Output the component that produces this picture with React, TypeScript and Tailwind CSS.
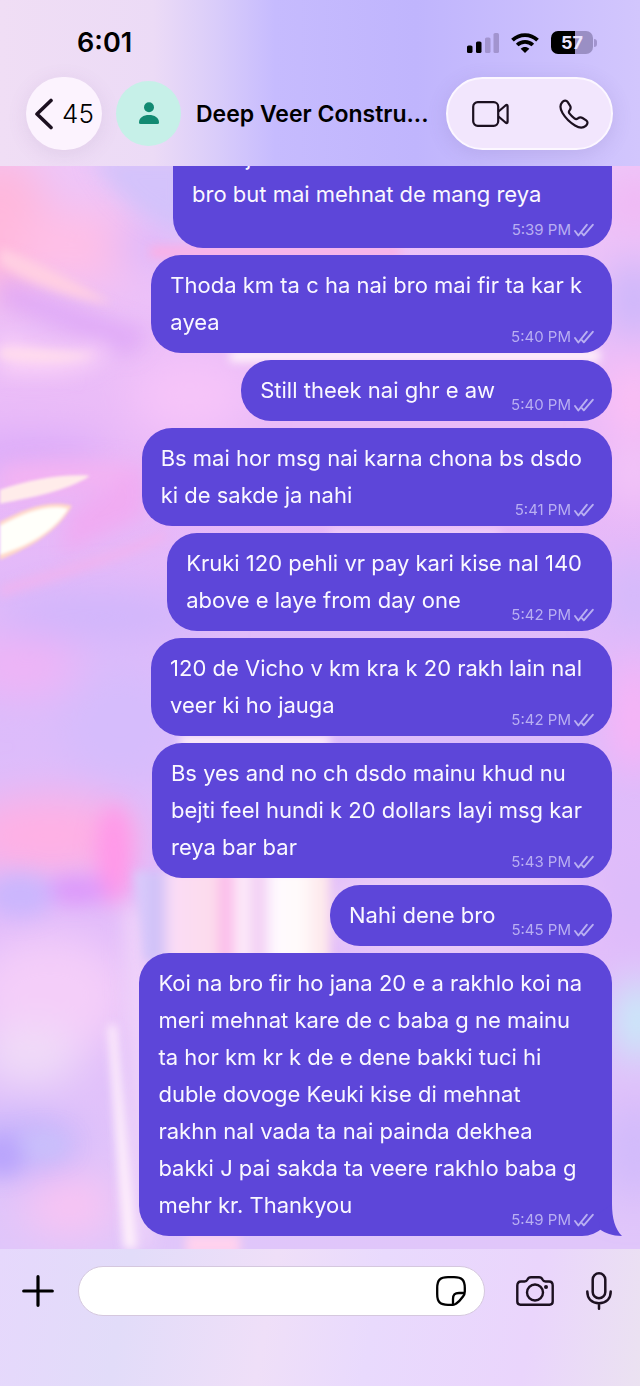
import React from "react";

type Message = {
  lines: string[];
  time: string;
};

const messages: Message[] = [
  { lines: ["Thoda km ta c ha nai bro mai fir ta kar k", "ayea"], time: "5:40 PM" },
  { lines: ["Still theek nai ghr e aw"], time: "5:40 PM" },
  { lines: ["Bs mai hor msg nai karna chona bs dsdo", "ki de sakde ja nahi"], time: "5:41 PM" },
  { lines: ["Kruki 120 pehli vr pay kari kise nal 140", "above e laye from day one"], time: "5:42 PM" },
  { lines: ["120 de Vicho v km kra k 20 rakh lain nal", "veer ki ho jauga"], time: "5:42 PM" },
  {
    lines: ["Bs yes and no ch dsdo mainu khud nu", "bejti feel hundi k 20 dollars layi msg kar", "reya bar bar"],
    time: "5:43 PM",
  },
  { lines: ["Nahi dene bro"], time: "5:45 PM" },
  {
    lines: [
      "Koi na bro fir ho jana 20 e a rakhlo koi na",
      "meri mehnat kare de c baba g ne mainu",
      "ta hor km kr k de e dene bakki tuci hi",
      "duble dovoge Keuki kise di mehnat",
      "rakhn nal vada ta nai painda dekhea",
      "bakki J pai sakda ta veere rakhlo baba g",
      "mehr kr. Thankyou",
    ],
    time: "5:49 PM",
  },
];

function Ticks() {
  return (
    <svg className="h-3.5 w-5" viewBox="0 0 20 14" fill="none" stroke="currentColor" strokeWidth="1.9" strokeLinecap="round" strokeLinejoin="round">
      <path d="M1 8L4.300 12.500L12.800 1.800" />
      <path d="M7.900 10.200L9.800 12.300L18.800 1.800" />
    </svg>
  );
}

function Meta({ time }: { time: string }) {
  return (
    <span className="flex shrink-0 items-center gap-[3px] text-[15px] leading-5 text-[#b9aff2]">
      {time}
      <Ticks />
    </span>
  );
}

function Bubble({ message, last }: { message: Message; last: boolean }) {
  const head = message.lines.slice(0, -1);
  const tailLine = message.lines[message.lines.length - 1];
  return (
    <li className="relative rounded-[30px] bg-[#5d46d9] py-3 pr-[18px] pl-[19px]">
      {head.map((line) => (
        <p key={line} className="pr-3 whitespace-nowrap">{line}</p>
      ))}
      <div className="flex items-end justify-between gap-4">
        <p className="whitespace-nowrap">{tailLine}</p>
        <div className="-mb-1.5">
          <Meta time={message.time} />
        </div>
      </div>
      {last && (
        <svg className="absolute right-[-10px] bottom-0 h-8 w-6" viewBox="0 0 24 32" fill="#5d46d9">
          <path d="M14 0C14 14 17 25 24 32C14 32 7 29 2 25.500L0 10Z" />
        </svg>
      )}
    </li>
  );
}

function Wallpaper() {
  return (
    <svg className="absolute inset-0 h-full w-full" viewBox="0 0 640 1084" preserveAspectRatio="none" aria-hidden="true">
      <defs>
        <linearGradient id="base" x1="0" y1="0" x2="0" y2="1">
          <stop offset="0" stopColor="#eec6f8" />
          <stop offset="0.3" stopColor="#e9b8f8" />
          <stop offset="0.5" stopColor="#dcbcfb" />
          <stop offset="0.7" stopColor="#e2bcfa" />
          <stop offset="1" stopColor="#e0c6fa" />
        </linearGradient>
        <linearGradient id="ray" x1="0" y1="0" x2="1" y2="0">
          <stop offset="0" stopColor="#dccdfb" />
          <stop offset="0.12" stopColor="#cfc0f8" />
          <stop offset="0.2" stopColor="#fbdcf6" />
          <stop offset="0.4" stopColor="#fddcec" />
          <stop offset="0.47" stopColor="#fbb8ea" />
          <stop offset="0.55" stopColor="#fdeefa" />
          <stop offset="0.64" stopColor="#f2cdf4" />
          <stop offset="0.72" stopColor="#fffaff" />
          <stop offset="0.85" stopColor="#fffafa" />
          <stop offset="1" stopColor="#fde2e8" />
        </linearGradient>
        <filter id="soft2" x="-50%" y="-50%" width="200%" height="200%"><feGaussianBlur stdDeviation="1.800" /></filter>
        <filter id="soft5" x="-50%" y="-50%" width="200%" height="200%"><feGaussianBlur stdDeviation="5" /></filter>
        <filter id="soft9" x="-50%" y="-50%" width="200%" height="200%"><feGaussianBlur stdDeviation="10" /></filter>
        <filter id="soft20" x="-50%" y="-50%" width="200%" height="200%"><feGaussianBlur stdDeviation="20" /></filter>
      </defs>
      <rect width="640" height="1084" fill="url(#base)" />
      <g filter="url(#soft20)">
        <ellipse cx="0" cy="60" rx="50" ry="70" fill="#ffb8dc" />
        <ellipse cx="80" cy="80" rx="66" ry="36" fill="#ffbfe6" />
        <ellipse cx="150" cy="80" rx="40" ry="20" fill="#dcb8fb" />
        <ellipse cx="30" cy="290" rx="80" ry="20" fill="#d9aafa" />
        <ellipse cx="190" cy="230" rx="60" ry="40" fill="#f6c4f9" />
        <ellipse cx="100" cy="450" rx="110" ry="24" fill="#cfb6fc" />
        <ellipse cx="20" cy="500" rx="60" ry="30" fill="#efb4f6" />
        <ellipse cx="120" cy="560" rx="60" ry="60" fill="#d6bcfc" />
        <ellipse cx="50" cy="670" rx="90" ry="40" fill="#ffb0e4" />
        <ellipse cx="50" cy="830" rx="80" ry="60" fill="#f4cef9" />
        <ellipse cx="30" cy="890" rx="50" ry="30" fill="#f0dcf8" />
        <ellipse cx="20" cy="980" rx="60" ry="30" fill="#c4b2fc" />
        <ellipse cx="70" cy="1040" rx="46" ry="30" fill="#f9c4f3" />
        <ellipse cx="450" cy="745" rx="130" ry="40" fill="#eed4f6" />
        <ellipse cx="634" cy="36" rx="30" ry="26" fill="#f2b8f4" />
        <ellipse cx="634" cy="134" rx="26" ry="40" fill="#c8b6fb" />
        <ellipse cx="634" cy="234" rx="26" ry="40" fill="#ffc0f4" />
        <ellipse cx="634" cy="310" rx="26" ry="30" fill="#f6c8f8" />
        <ellipse cx="634" cy="430" rx="26" ry="40" fill="#d2bafb" />
        <ellipse cx="634" cy="550" rx="26" ry="60" fill="#fbb4f6" />
        <ellipse cx="634" cy="740" rx="26" ry="50" fill="#dcbcfa" />
        <ellipse cx="638" cy="855" rx="20" ry="40" fill="#c0faf8" />
        <ellipse cx="634" cy="985" rx="30" ry="50" fill="#d0bafb" />
      </g>
      <g filter="url(#soft9)">
        <path d="M90 -10H190V70C150 60 120 40 90 -10Z" fill="#cdc2fb" opacity="0.8" />
        <path d="M0 110C50 130 100 150 150 166L130 190C80 170 30 150 0 140Z" fill="#dba2f7" opacity="0.7" />
        <path d="M0 168C50 190 80 190 104 176C112 196 80 214 0 206Z" fill="#fbd2f8" />
        <path d="M0 300C60 290 110 296 144 300V306C90 330 50 330 0 330Z" fill="#f3b2f2" />
        <path d="M144 300L70 345L60 390L144 350Z" fill="#f0abf2" />
        <ellipse cx="114" cy="690" rx="18" ry="50" fill="#ff98e8" />
        <ellipse cx="76" cy="725" rx="34" ry="14" fill="#dc98fb" />
        <ellipse cx="20" cy="730" rx="34" ry="22" fill="#cbb6fd" />
        <ellipse cx="44" cy="980" rx="26" ry="14" fill="#c9c0fb" />
        <ellipse cx="2" cy="990" rx="22" ry="20" fill="#b9a4fc" />
        <path d="M124 740H150V1084H134Z" fill="#f0d4f9" />
      </g>
      <g filter="url(#soft5)">
        <path d="M0 82C40 96 80 118 112 138C74 132 30 118 0 98Z" fill="#ffcfe2" />
        <path d="M0 182C30 182 60 186 96 188C70 200 30 196 0 192Z" fill="#ffdcec" />
        <path d="M0 420C60 400 120 384 166 364V374C120 396 60 414 0 432Z" fill="#f2b2ee" opacity="0.7" />
        <path d="M150 80H400V92H150Z" fill="#f9b0e6" />
        <path d="M230 184H600V196H230Z" fill="#fff2fa" />
        <path d="M330 366H500V370H330Z" fill="#fff0f8" />
        <path d="M180 570H330V582H180Z" fill="#fff0f8" />
        <path d="M134 706H330V796H144Z" fill="url(#ray)" />
        <path d="M108 860L124 1084H137L116 860Z" fill="#fff0fb" />
        <path d="M186 1070H240V1090H186Z" fill="#ffd2ee" />
      </g>
      <g filter="url(#soft2)">
        <path d="M0 324C30 314 60 308 90 310C66 326 30 332 0 338Z" fill="#ffecea" />
        <path d="M0 356C26 342 50 334 72 340C58 366 30 382 0 394Z" fill="#ffd9c8" />
        <path d="M0 360C26 346 48 338 68 343C54 366 28 380 0 389Z" fill="#fffffa" />
      </g>
    </svg>
  );
}

export default function App() {
  return (
    <div className="flex h-screen flex-col overflow-hidden bg-[#e6cdf9] font-['Inter','Liberation_Sans',sans-serif] text-black">
      <header className="shrink-0 bg-[linear-gradient(90deg,#f0def5_0%,#ecdbf6_24%,#d9ccfa_34%,#c6bbfe_43%,#c0b5fd_65%,#d2c6fd_100%)] pb-4">
        <div className="flex h-[77px] items-center justify-between pt-2 pr-[43px] pl-[77px]">
          <time className="text-[27px] leading-8 font-semibold">6:01</time>
          <div className="flex items-center gap-3">
            <svg className="h-5 w-8" viewBox="0 0 32 20">
              <rect x="0" y="12.500" width="5.500" height="7.500" rx="1.600" />
              <rect x="9" y="8.500" width="5.500" height="11.500" rx="1.600" />
              <rect x="18" y="4.500" width="5.500" height="15.500" rx="1.600" fill="#a294cf" />
              <rect x="26.500" y="0" width="5.500" height="20" rx="1.600" fill="#a294cf" />
            </svg>
            <svg className="h-5 w-7" viewBox="0 0 28 20" fill="none" stroke="#000" strokeWidth="3.800">
              <path d="M1.500 7.200C8.500 0.300 19.500 0.300 26.500 7.200" />
              <path d="M6.200 12C10.600 7.800 17.400 7.800 21.800 12" />
              <path d="M14 20l-4.300-4.300c2.400-2.200 6.200-2.200 8.600 0z" fill="#000" stroke="none" />
            </svg>
            <div className="flex items-center gap-px">
              <div className="flex h-[23px] w-[42px] items-center justify-center rounded-[7px] bg-linear-to-r from-black from-57% to-[#9a8fc4] to-57% text-lg leading-5 font-bold text-[#ece6ff]">57</div>
              <div className="h-2 w-[3px] rounded-r-full bg-[#a294cf]" />
            </div>
          </div>
        </div>
        <div className="flex items-center pr-[27px] pl-[26px]">
          <button aria-label="Back, 45 unread chats" className="flex h-[73px] w-[76px] shrink-0 items-center justify-center gap-2 rounded-full bg-[#fcf3fe] text-[26px] font-light shadow-[0_4px_20px_rgba(120,90,150,0.12)]">
            <svg className="h-8 w-5" viewBox="0 0 20 32" fill="none" stroke="#1c1020" strokeWidth="3.600" strokeLinecap="round" strokeLinejoin="round">
              <path d="M17 2.500L3 16l14 13.500" />
            </svg>
            45
          </button>
          <div className="ml-3.5 flex size-[65px] shrink-0 items-center justify-center rounded-full bg-[#c6f0e8]">
            <svg className="h-6 w-5" viewBox="0 0 20 24" fill="#128a72">
              <circle cx="10" cy="5.200" r="5" />
              <path d="M0 20.500C0 15.600 4.500 13 10 13S20 15.600 20 20.500Q20 22 18.500 22H1.500Q0 22 0 20.500Z" />
            </svg>
          </div>
          <h1 className="ml-[15px] min-w-0 flex-1 text-[23px] leading-8 font-semibold whitespace-nowrap">Deep Veer Constru...</h1>
          <div className="flex h-[73px] w-[167px] shrink-0 items-center justify-between rounded-full border-2 border-[#fcf7ff] bg-[#f2e6fd] pr-[22px] pl-6 shadow-[0_4px_20px_rgba(100,80,150,0.16)]">
            <button aria-label="Video call">
              <svg className="h-[26px] w-[37px]" viewBox="0 0 37 26" fill="none" stroke="#1c1020" strokeWidth="2.200" strokeLinejoin="round">
                <rect x="1.200" y="1.200" width="25" height="23.600" rx="4.500" />
                <path d="M26.500 10.500L33.500 4.500Q35.600 3 35.600 5.200V20.800Q35.600 23 33.500 21.500L26.500 15.500" />
              </svg>
            </button>
            <button aria-label="Voice call">
              <svg className="h-[30px] w-[30px]" viewBox="0 0 30 30" fill="none" stroke="#1c1020" strokeWidth="2.200" strokeLinejoin="round">
                <path d="M3.200 3.300C5 1.200 7.300 1 8.600 2.900L11 6.600C12 8.200 11.800 9.700 10.600 11.200C9.500 12.500 9.600 13.400 10.600 14.700C12 16.500 13.600 18.100 15.400 19.400C16.700 20.400 17.600 20.500 18.900 19.400C20.400 18.200 21.900 18 23.500 19L27.200 21.400C29.100 22.700 28.900 25 26.800 26.800C24.300 29 20.700 29.300 16 26.500C10.400 23.100 6.600 19.200 3.500 14C0.700 9.300 1 5.800 3.200 3.300Z" />
              </svg>
            </button>
          </div>
        </div>
      </header>

      <main className="relative flex min-h-0 flex-1 flex-col justify-end overflow-hidden">
        <Wallpaper />
        <ul className="relative flex flex-col items-end gap-[7px] pr-7 pb-[13px] text-[22px] leading-[37px] text-[#faf8ff]">
          <li className="w-[439px] rounded-[30px] bg-[#5d46d9] py-3 pr-[18px] pl-[19px]">
            <p className="pl-[54px]">j</p>
            <p>bro but mai mehnat de mang reya</p>
            <div className="-mb-1 flex justify-end pt-[7px]">
              <Meta time="5:39 PM" />
            </div>
          </li>
          {messages.map((message, i) => (
            <Bubble key={i} message={message} last={i === messages.length - 1} />
          ))}
        </ul>
      </main>

      <footer className="shrink-0 bg-[linear-gradient(100deg,#e6d8fc_0%,#e2dcf9_20%,#efdff8_42%,#e9dafd_58%,#ead5fc_82%,#ebe2f1_100%)] px-[22px] pt-[17px] pb-[70px]">
        <div className="flex items-center pr-1.5">
          <button aria-label="Attach">
            <svg className="size-8" viewBox="0 0 32 32" stroke="#000" strokeWidth="3.200" strokeLinecap="round">
              <path d="M16 1.700V30.300M1.700 16H30.300" />
            </svg>
          </button>
          <div className="ml-6 flex h-[50px] min-w-0 flex-1 items-center rounded-full border border-[#d5c8de] bg-white pr-[18px] pl-5">
            <input aria-label="Message" type="text" className="min-w-0 flex-1 bg-transparent text-[22px] outline-none" />
            <button aria-label="Stickers">
              <svg className="size-[30px]" viewBox="0 0 30 30" fill="none" stroke="#000" strokeWidth="2.300" strokeLinejoin="round">
                <path d="M17 28.800H12C4 28.800 1.200 26 1.200 18V12C1.200 4 4 1.200 12 1.200H18C26 1.200 28.800 4 28.800 12V15.500C28.800 17.500 28.600 18.500 27 20.500C24.500 24 22.500 26 20 27.700C18.800 28.600 18 28.800 17 28.800Z" />
                <path d="M17 28.500V23C17 18.500 18.500 17 23 17H28.500" />
              </svg>
            </button>
          </div>
          <button aria-label="Camera" className="ml-[31px]">
            <svg className="h-[30px] w-[38px]" viewBox="0 0 38 30" fill="none" stroke="#1c1020" strokeWidth="2.400" strokeLinejoin="round">
              <path d="M1.300 9.500Q1.300 5.500 5 5.500H8.500Q10.500 5.500 11.500 3.500Q12.500 1.300 15 1.300H23Q25.500 1.300 26.500 3.500Q27.500 5.500 29.500 5.500H33Q36.700 5.500 36.700 9.500V25.500Q36.700 28.700 33.500 28.700H4.500Q1.300 28.700 1.300 25.500Z" />
              <circle cx="19" cy="16.500" r="8" />
              <circle cx="30" cy="11" r="2" fill="#1c1020" stroke="none" />
            </svg>
          </button>
          <button aria-label="Record voice message" className="ml-8">
            <svg className="h-[38px] w-[26px]" viewBox="0 0 26 38" fill="none" stroke="#1c1020" strokeWidth="2.500" strokeLinecap="round">
              <rect x="6.700" y="1.300" width="12.600" height="25" rx="6.300" />
              <path d="M1.300 19.500C1.300 27 6 31.200 13 31.200S24.700 27 24.700 19.500M13 31.200V36.700" />
            </svg>
          </button>
        </div>
      </footer>
    </div>
  );
}
